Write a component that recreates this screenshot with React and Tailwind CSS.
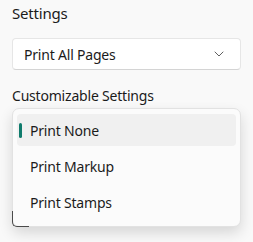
import React from 'react';

const items = ['Print None', 'Print Markup', 'Print Stamps'];

export default function App() {
    return (
        <div className="w-[253px] h-[242px] bg-[#f9f9f9] text-[#1b1b1b] px-3 overflow-hidden tracking-[-0.2px]" style={{ fontFamily: '"Segoe UI", "Noto Sans", sans-serif' }}>
            <div className="pt-[2px] text-[15px] leading-[22px]">Settings</div>

            <div className="mt-[14px] h-[32px] bg-white border border-[#e6e6e6] border-b-[#d4d4d4] rounded-[4px] flex items-center justify-between pl-[11px] pr-[16px]">
                <span className="text-[14px]">Print All Pages</span>
                <svg width="10" height="6" viewBox="0 0 10 6" fill="none">
                    <path d="M1 1l4 4 4-4" stroke="#606060" strokeWidth="1" strokeLinecap="round" strokeLinejoin="round" />
                </svg>
            </div>

            <div className="mt-[16px] text-[14px] leading-[20px]">Customizable Settings</div>

            <div className="relative mt-[2px]">
                <div className="relative bg-[#fbfbfb] border border-[#e2e2e2] rounded-[7px] shadow-[0_6px_14px_rgba(0,0,0,0.14)] px-[4px] pt-[5px] pb-[8px] flex flex-col gap-[4px]">
                    {items.map((item, i) => (
                        <div key={item} className={`relative h-[32px] flex items-center pl-[13px] rounded-[4px] text-[14px] ${i === 0 ? 'bg-[#f0f0f0]' : ''}`}>
                            {i === 0 && <div className="absolute left-[2px] top-[9px] w-[3px] h-[15px] rounded-full bg-[#0f7b6c]" />}
                            {item}
                        </div>
                    ))}
                </div>
                {/* focus edge of the combobox showing under the flyout corner */}
                <div className="absolute left-0 bottom-0 w-[17px] h-[16px] border-l border-b border-[#4a4a4a] rounded-bl-[5px]" />
            </div>
        </div>
    );
}
